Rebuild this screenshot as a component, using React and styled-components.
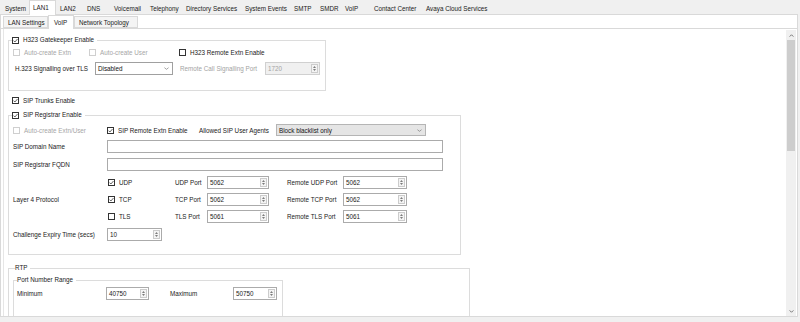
import React from "react";
import styled, { createGlobalStyle } from "styled-components";

const GlobalStyle = createGlobalStyle`
  html, body { margin: 0; padding: 0; }
  body {
    font-family: "Liberation Sans", Arial, sans-serif;
    font-size: 6.3px;
    color: #1a1a1a;
    background: #f0f0f0;
  }
  * { box-sizing: border-box; }
`;

const MAIN_TABS = [
  ["System", 28], ["LAN1", 27, true], ["LAN2", 27], ["DNS", 27], ["Voicemail", 36],
  ["Telephony", 36], ["Directory Services", 59], ["System Events", 49], ["SMTP", 26],
  ["SMDR", 25], ["VoIP", 29], ["Contact Center", 52], ["Avaya Cloud Services", 70],
];

const SUB_TABS = [["LAN Settings", 45, false, 4], ["VoIP", 26, true, 5], ["Network Topology", 64, false, 4]];

function CheckBox({ checked, disabled }) {
  return (
    <Box $disabled={disabled}>
      {checked && (
        <svg width="5" height="5" viewBox="0 0 10 10">
          <path d="M1 5.2 L3.8 8 L9 2" stroke="#333" strokeWidth="1.5" fill="none" />
        </svg>
      )}
    </Box>
  );
}

function CheckItem({ label, checked, disabled, w }) {
  return (
    <CheckWrap $w={w} $disabled={disabled}>
      <CheckBox checked={checked} disabled={disabled} />
      <span>{label}</span>
    </CheckWrap>
  );
}

function Spin({ value, w, disabled }) {
  return (
    <SpinField $w={w} $disabled={disabled}>
      <SpinValue>{value}</SpinValue>
      <SpinButtons>
        <svg width="3" height="2" viewBox="0 0 4 2">
          <path d="M0 2 L2 0 L4 2 Z" fill="#555" />
        </svg>
        <svg width="3" height="2" viewBox="0 0 4 2">
          <path d="M0 0 L2 2 L4 0 Z" fill="#555" />
        </svg>
      </SpinButtons>
    </SpinField>
  );
}

function Combo({ value, w, flat }) {
  return (
    <ComboField $w={w} $flat={flat}>
      <span>{value}</span>
      <svg width="5" height="3" viewBox="0 0 6 3">
        <polyline points="0.5,0.5 3,2.5 5.5,0.5" stroke="#777" strokeWidth="0.8" fill="none" />
      </svg>
    </ComboField>
  );
}

function Arrow({ down }) {
  return (
    <ArrowCell>
      <svg width="5" height="3" viewBox="0 0 6 4">
        <polyline
          points={down ? "0.5,0.5 3,3 5.5,0.5" : "0.5,3.5 3,1 5.5,3.5"}
          stroke="#606060"
          strokeWidth="1.1"
          fill="none"
        />
      </svg>
    </ArrowCell>
  );
}

const PORTS = [
  ["UDP", true, "5062", "5062"],
  ["TCP", true, "5062", "5062"],
  ["TLS", false, "5061", "5061"],
];

export default function App() {
  return (
    <Window>
      <GlobalStyle />
      <TabStrip $indent={1}>
        {MAIN_TABS.map(([name, w, active]) => (
          <Tab key={name} $w={w} $active={active}>
            {name}
          </Tab>
        ))}
      </TabStrip>
      <LanPage>
        <SubStrip>
          {SUB_TABS.map(([name, w, active, pad]) => (
            <SubTab key={name} $w={w} $active={active} $pad={pad}>
              {name}
            </SubTab>
          ))}
        </SubStrip>
        <VoipPage>
          <FormArea>
            <GroupBox $mt={7} $pb={15} $w={318}>
              <GroupTitle $indent={3}>
                <TitleInner>
                  <CheckBox checked />
                  <span>H323 Gatekeeper Enable</span>
                </TitleInner>
              </GroupTitle>
              <Row $mt={4} $pl={4} $h={9}>
                <CheckItem w={76} label="Auto-create Extn" disabled />
                <CheckItem w={90} label="Auto-create User" disabled />
                <CheckItem label="H323 Remote Extn Enable" />
              </Row>
              <Row $mt={5} $pl={6}>
                <FieldLabel $w={80}>H.323 Signalling over TLS</FieldLabel>
                <Combo w={78} value="Disabled" />
                <FieldLabel $w={85} $ml={7} $muted>
                  Remote Call Signalling Port
                </FieldLabel>
                <Spin w={55} value="1720" disabled />
              </Row>
            </GroupBox>

            <Row $mt={6} $pl={4} $h={9}>
              <CheckItem label="SIP Trunks Enable" checked />
            </Row>

            <GroupBox $mt={7} $pb={13} $w={453}>
              <GroupTitle $indent={3}>
                <TitleInner>
                  <CheckBox checked />
                  <span>SIP Registrar Enable</span>
                </TitleInner>
              </GroupTitle>
              <Row $mt={5} $pl={4} $h={12}>
                <CheckItem w={94} label="Auto-create Extn/User" disabled />
                <CheckItem w={92} label="SIP Remote Extn Enable" checked />
                <FieldLabel $w={77}>Allowed SIP User Agents</FieldLabel>
                <Combo w={150} value="Block blacklist only" flat />
              </Row>
              <Row $mt={4} $pl={4}>
                <FieldLabel $w={94}>SIP Domain Name</FieldLabel>
                <TextBox $w={336} />
              </Row>
              <Row $mt={5} $pl={4}>
                <FieldLabel $w={94}>SIP Registrar FQDN</FieldLabel>
                <TextBox $w={336} />
              </Row>
              <ProtocolBlock>
                <FieldLabel $w={95}>Layer 4 Protocol</FieldLabel>
                <PortRows>
                  {PORTS.map(([proto, on, local, remote]) => (
                    <Row key={proto}>
                      <CheckItem w={67} label={proto} checked={on} />
                      <FieldLabel $w={32}>{proto} Port</FieldLabel>
                      <Spin w={62} value={local} />
                      <FieldLabel $w={56} $ml={18}>
                        Remote {proto} Port
                      </FieldLabel>
                      <Spin w={64} value={remote} />
                    </Row>
                  ))}
                </PortRows>
              </ProtocolBlock>
              <Row $mt={5} $pl={4}>
                <FieldLabel $w={94}>Challenge Expiry Time (secs)</FieldLabel>
                <Spin w={55} value="10" />
              </Row>
            </GroupBox>

            <GroupBox $mt={9} $pb={0} $w={462}>
              <GroupTitle $indent={6}>RTP</GroupTitle>
              <GroupBox $mt={4} $ml={4} $pb={20} $w={270}>
                <GroupTitle $indent={3}>Port Number Range</GroupTitle>
                <Row $mt={3} $pl={3}>
                  <FieldLabel $w={89}>Minimum</FieldLabel>
                  <Spin w={43} value="40750" />
                  <FieldLabel $w={63} $ml={21}>
                    Maximum
                  </FieldLabel>
                  <Spin w={44} value="50750" />
                </Row>
              </GroupBox>
            </GroupBox>
          </FormArea>
          <ScrollBar>
            <Arrow />
            <Thumb />
            <Track />
            <Arrow down />
          </ScrollBar>
        </VoipPage>
      </LanPage>
    </Window>
  );
}

const Window = styled.div`
  width: 800px;
  height: 322px;
  overflow: hidden;
  background: #f0f0f0;
  display: flex;
  flex-direction: column;
`;

const TabStrip = styled.div`
  display: flex;
  align-items: flex-end;
  height: 14px;
  padding-left: ${(p) => p.$indent}px;
  position: relative;
  z-index: 1;
`;

const Tab = styled.div`
  width: ${(p) => p.$w}px;
  height: ${(p) => (p.$active ? 15 : 13)}px;
  margin-bottom: ${(p) => (p.$active ? -1 : 0)}px;
  padding: 0 0 ${(p) => (p.$active ? 2 : 0)}px 3px;
  display: flex;
  align-items: center;
  white-space: nowrap;
  background: ${(p) => (p.$active ? "#ffffff" : "transparent")};
  border: 1px solid ${(p) => (p.$active ? "#d9d9d9" : "transparent")};
  border-bottom: none;
`;

const LanPage = styled.div`
  height: 303px;
  margin-right: 2px;
  background: #ffffff;
  border: 1px solid #d9d9d9;
  display: flex;
  flex-direction: column;
`;

const SubStrip = styled.div`
  display: flex;
  align-items: flex-end;
  height: 13px;
  padding-left: 2px;
  position: relative;
  z-index: 1;
`;

const SubTab = styled.div`
  width: ${(p) => p.$w}px;
  height: ${(p) => (p.$active ? 14 : 12)}px;
  margin-bottom: ${(p) => (p.$active ? -1 : 0)}px;
  padding: 0 0 ${(p) => (p.$active ? 1 : 0)}px ${(p) => p.$pad}px;
  display: flex;
  align-items: center;
  white-space: nowrap;
  background: ${(p) => (p.$active ? "#ffffff" : "#f4f4f4")};
  border: 1px solid #d9d9d9;
  border-bottom: ${(p) => (p.$active ? "none" : "1px solid #d9d9d9")};
`;

const VoipPage = styled.div`
  flex: 1;
  min-height: 0;
  display: flex;
  border-top: 1px solid #d9d9d9;
`;

const FormArea = styled.div`
  flex: 1;
  margin-left: 2px;
  padding-left: 4px;
  border-left: 1px solid #e6e6e6;
  overflow: hidden;
  display: flex;
  flex-direction: column;
  align-items: flex-start;
`;

const GroupBox = styled.fieldset`
  flex: none;
  margin: ${(p) => p.$mt}px 0 0 ${(p) => p.$ml || 0}px;
  padding: 0 0 ${(p) => p.$pb}px 0;
  width: ${(p) => p.$w}px;
  min-width: 0;
  border: 1px solid #dcdcdc;
`;

const GroupTitle = styled.legend`
  margin-left: ${(p) => p.$indent}px;
  padding: 0 3px 0 0;
  height: 8px;
  line-height: 8px;
  white-space: nowrap;
`;

const TitleInner = styled.span`
  display: flex;
  align-items: center;
  gap: 4px;
  height: 8px;
`;

const Row = styled.div`
  display: flex;
  align-items: center;
  height: ${(p) => p.$h || 13}px;
  margin-top: ${(p) => p.$mt || 0}px;
  padding-left: ${(p) => p.$pl || 0}px;
  white-space: nowrap;
`;

const ProtocolBlock = styled.div`
  display: flex;
  align-items: center;
  margin-top: 5px;
  padding-left: 4px;
`;

const PortRows = styled.div`
  display: flex;
  flex-direction: column;
  gap: 4px;
`;

const FieldLabel = styled.span`
  flex: none;
  width: ${(p) => p.$w}px;
  margin-left: ${(p) => p.$ml || 0}px;
  color: ${(p) => (p.$muted ? "#a3a3a3" : "#1a1a1a")};
  white-space: nowrap;
`;

const Box = styled.span`
  flex: none;
  width: 7px;
  height: 7px;
  border: 1px solid ${(p) => (p.$disabled ? "#cfcfcf" : "#333333")};
  background: #ffffff;
  display: inline-flex;
  align-items: center;
  justify-content: center;
`;

const CheckWrap = styled.span`
  flex: none;
  width: ${(p) => (p.$w ? `${p.$w}px` : "auto")};
  display: flex;
  align-items: center;
  gap: 4px;
  color: ${(p) => (p.$disabled ? "#a6a6a6" : "#1a1a1a")};
`;

const SpinField = styled.span`
  flex: none;
  width: ${(p) => p.$w}px;
  height: 13px;
  border: 1px solid ${(p) => (p.$disabled ? "#d0d0d0" : "#ababab")};
  background: ${(p) => (p.$disabled ? "#f0f0f0" : "#ffffff")};
  color: ${(p) => (p.$disabled ? "#a3a3a3" : "#1a1a1a")};
  display: flex;
  align-items: center;
  padding-left: 2px;
`;

const SpinValue = styled.span`
  flex: 1;
`;

const SpinButtons = styled.span`
  width: 7px;
  height: 9px;
  margin-right: 1px;
  border: 1px solid #cccccc;
  background: #f4f4f4;
  display: flex;
  flex-direction: column;
  align-items: center;
  justify-content: center;
  gap: 1px;
`;

const ComboField = styled.span`
  flex: none;
  width: ${(p) => p.$w}px;
  height: ${(p) => (p.$flat ? 12 : 13)}px;
  border: 1px solid ${(p) => (p.$flat ? "#b5b5b5" : "#a0a0a0")};
  background: ${(p) => (p.$flat ? "#e5e5e5" : "#ffffff")};
  display: flex;
  align-items: center;
  justify-content: space-between;
  padding: 0 3px 0 2px;
  color: #111111;
`;

const TextBox = styled.span`
  flex: none;
  width: ${(p) => p.$w}px;
  height: 13px;
  border: 1px solid #ababab;
  background: #ffffff;
`;

const ScrollBar = styled.div`
  width: 10px;
  margin: 1px 1px 0 0;
  background: #f0f0f0;
  display: flex;
  flex-direction: column;
`;

const ArrowCell = styled.div`
  height: 10px;
  display: flex;
  align-items: center;
  justify-content: center;
`;

const Thumb = styled.div`
  height: 111px;
  margin: 0 1px;
  background: #cdcdcd;
`;

const Track = styled.div`
  flex: 1;
`;
